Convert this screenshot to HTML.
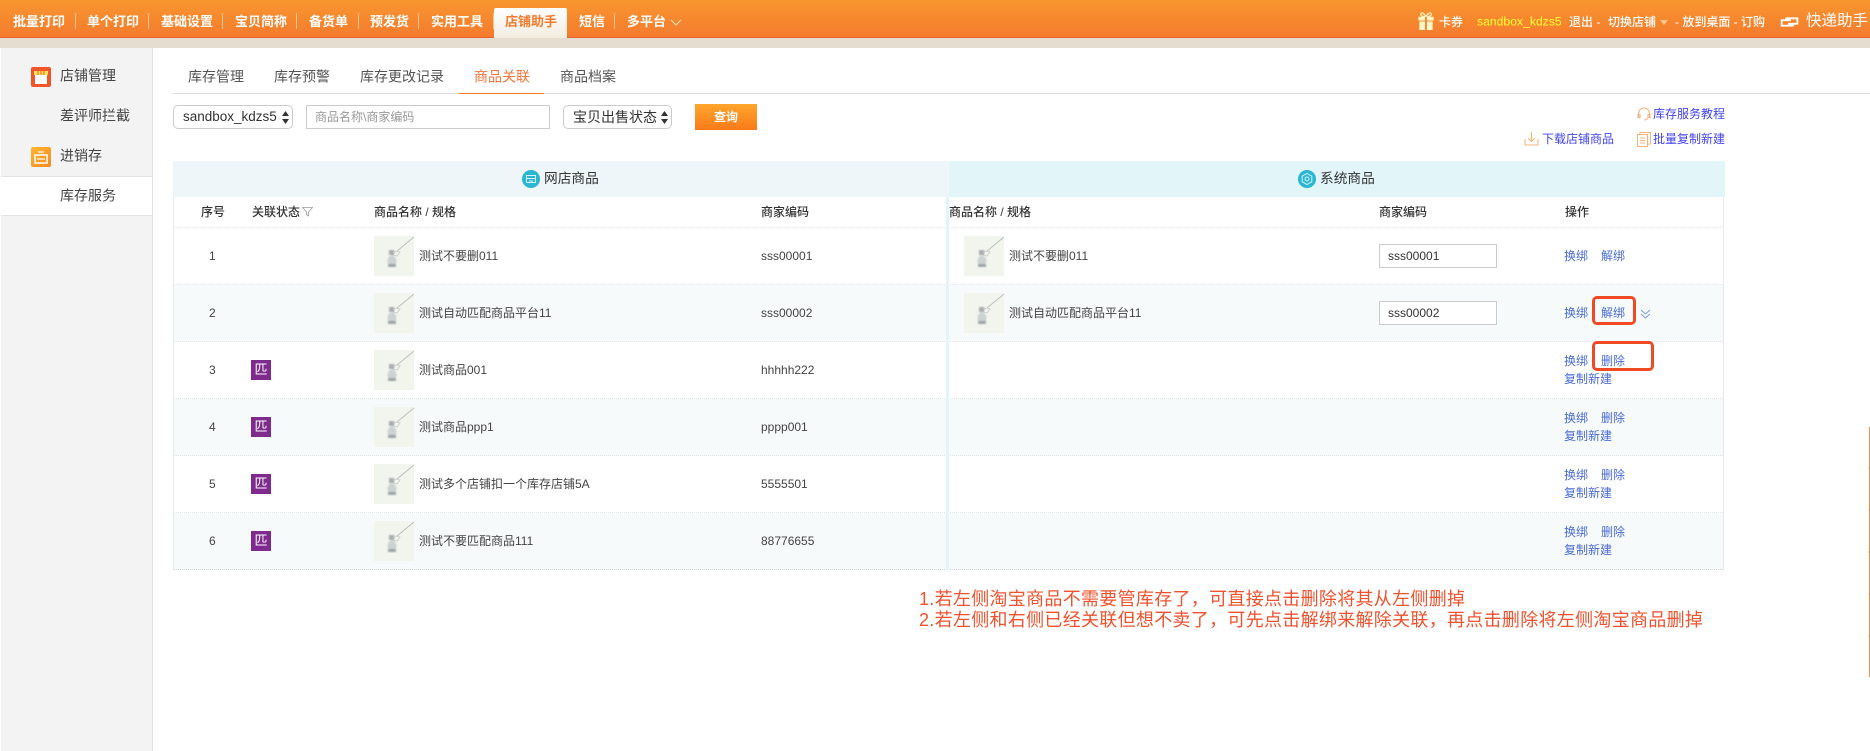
<!DOCTYPE html>
<html lang="zh"><head><meta charset="utf-8"><title>库存服务</title>
<style>
html,body{margin:0;padding:0}
body{width:1870px;height:751px;overflow:hidden;background:#fff;position:relative;font-family:"Liberation Sans","Noto Sans CJK SC",sans-serif;font-size:12px;color:#444}
.a{position:absolute;white-space:nowrap}
.c{transform:translateY(-50%);line-height:1.2}
.h{color:#fff;font-size:13px;font-weight:bold;top:21.500px}
.sep{position:absolute;top:13px;height:16px;width:1px;background:#fbc593}
.s{font-size:14px;color:#444}
.t{font-size:14px;color:#555;top:77px}
.b{position:absolute;border:1px solid #ccc;box-sizing:border-box;background:#fff}
.sel{border-radius:5px;font-size:13.500px;color:#333;line-height:22px}
.th{font-size:12px;color:#333;font-weight:500;top:212px}
.row{position:absolute;left:174px;width:1549px;height:56px;border-bottom:1px dotted #e3e6e7}
.alt{background:#f7fafb}
.n{font-size:12px;color:#444}
.l{font-size:12px;color:#4a6bd6}
.blue{font-size:12px;color:#4343f0}
.badge{position:absolute;left:251px;width:20px;height:20px;background:#7e2b8d;color:#fff;font-size:13px;line-height:20px;text-align:center}
.inp{position:absolute;left:1379px;width:118px;height:24px;border:1px solid #ccc;box-sizing:border-box;font-size:12px;line-height:22px;padding-left:8px;color:#333;background:#fff}
.red{position:absolute;border:3px solid #f04a25;border-radius:5px;box-sizing:border-box}
.note{font-size:18px;color:#f0522d;letter-spacing:.3px;left:919px}
.w{color:#fff;font-size:12px;font-weight:500;top:21.500px}
svg{position:absolute;display:block}
</style></head><body>
<svg width="0" height="0"><defs>
<filter id="bl"><feGaussianBlur stdDeviation=".9"/></filter>
<symbol id="th" viewBox="0 0 40 40"><rect width="40" height="40" fill="#f2f5ee"/><path d="M23 15L40 1" stroke="#b9bfbd" stroke-width="1" fill="none"/><path d="M21 15l5 1-3 4-4-1z" fill="none" stroke="#c6cbc9" stroke-width=".8"/><g filter="url(#bl)"><path d="M15 14h5v5h-5z" fill="#a8aeb0"/><ellipse cx="18" cy="25" rx="4.500" ry="5.500" fill="#cdd2d3"/><rect x="14" y="28" width="8" height="3" fill="#8a9296" opacity=".75"/></g></symbol>
</defs></svg>

<!-- top bar -->
<div class="a" style="left:0;top:0;width:1870px;height:38px;background:linear-gradient(#f99630,#f47b2d);border-bottom:1px solid #e9602a;box-sizing:border-box"></div>
<div class="a" style="left:0;top:38px;width:1870px;height:10px;background:#e5ddd0"></div>
<div class="a h c" style="left:13px">批量打印</div><div class="sep" style="left:75px"></div>
<div class="a h c" style="left:87px">单个打印</div><div class="sep" style="left:148px"></div>
<div class="a h c" style="left:161px">基础设置</div><div class="sep" style="left:222px"></div>
<div class="a h c" style="left:235px">宝贝简称</div><div class="sep" style="left:296px"></div>
<div class="a h c" style="left:309px">备货单</div><div class="sep" style="left:358px"></div>
<div class="a h c" style="left:370px">预发货</div><div class="sep" style="left:418px"></div>
<div class="a h c" style="left:431px">实用工具</div><div class="sep" style="left:493px"></div>
<div class="a" style="left:494px;top:8px;width:73px;height:30px;background:linear-gradient(#fff,#f3ede0);border-radius:2px 2px 0 0"></div>
<div class="a h c" style="left:505px;color:#f47b2d">店铺助手</div>
<div class="a h c" style="left:579px">短信</div><div class="sep" style="left:614px"></div>
<div class="a h c" style="left:627px">多平台</div>
<svg style="left:670px;top:19px" width="12" height="8"><path d="M1 1l5 5 5-5" fill="none" stroke="#fde3c8" stroke-width="1"/></svg>

<svg style="left:1418px;top:12px" width="16" height="18" viewBox="0 0 16 19"><path d="M8 5C6 1 3 0 2.500 2 2 4 5 5 8 5c3 0 6-1 5.500-3C13 0 10 1 8 5z" fill="none" stroke="#fff6c8" stroke-width="1.300"/><rect y="5" width="16" height="4" fill="#fff6c8"/><rect x="1" y="10" width="14" height="9" fill="#fff6c8"/><rect x="7" y="5" width="2" height="14" fill="#f5852e"/></svg>
<div class="a w c" style="left:1439px">卡券</div>
<div class="a c" style="left:1477px;top:21.500px;color:#ffff33;font-size:12.200px">sandbox_kdzs5</div>
<div class="a w c" style="left:1569px">退出 -</div>
<div class="a w c" style="left:1608px">切换店铺</div>
<svg style="left:1660px;top:20px" width="8" height="5"><path d="M0 0h8L4 5z" fill="#fbc593"/></svg>
<div class="a w c" style="left:1675px">- 放到桌面 - 订购</div>
<svg style="left:1780px;top:16px" width="20" height="12" viewBox="0 0 20 13"><path d="M5 2.500h13v6H8M14 10.500H1v-6h10" fill="none" stroke="#fff" stroke-width="2"/></svg>
<div class="a c" style="left:1806px;top:21.500px;color:#fff;font-size:15.500px">快递助手</div>

<!-- sidebar -->
<div class="a" style="left:1px;top:48px;width:151px;height:703px;background:#f3f3f3;border-right:1px solid #e3e3e3"></div>
<svg style="left:31px;top:67px" width="20" height="20" viewBox="0 0 20 20"><rect width="20" height="20" rx="2" fill="#f3552a"/><rect x="4" y="8" width="12" height="9" fill="#fff"/><path d="M3 4h14v4H3z" fill="#ffe75a"/><path d="M7 4v4M10 4v4M13 4v4" stroke="#f3552a"/></svg>
<div class="a s c" style="left:60px;top:76px">店铺管理</div>
<div class="a s c" style="left:60px;top:116px">差评师拦截</div>
<svg style="left:31px;top:147px" width="20" height="20" viewBox="0 0 20 20"><defs><linearGradient id="g1" x1="0" y1="0" x2="1" y2="1"><stop offset="0" stop-color="#ffb52f"/><stop offset="1" stop-color="#f58a22"/></linearGradient></defs><rect width="20" height="20" rx="2" fill="url(#g1)"/><rect x="4" y="8" width="12" height="8" fill="none" stroke="#fff" stroke-width="1.500"/><path d="M7 5h6M6 12h8" stroke="#fff" stroke-width="1.300"/></svg>
<div class="a s c" style="left:60px;top:156px">进销存</div>
<div class="a" style="left:1px;top:176px;width:151px;height:40px;background:#fff;border-top:1px solid #e4e4e4;border-bottom:1px solid #e4e4e4;box-sizing:border-box"></div>
<div class="a s c" style="left:60px;top:196px">库存服务</div>

<!-- tabs -->
<div class="a" style="left:173px;top:93px;width:1697px;height:1px;background:#ddd"></div>
<div class="a t c" style="left:188px">库存管理</div>
<div class="a t c" style="left:274px">库存预警</div>
<div class="a t c" style="left:360px">库存更改记录</div>
<div class="a t c" style="left:474px;color:#f4743b">商品关联</div>
<div class="a t c" style="left:560px">商品档案</div>
<div class="a" style="left:459px;top:93px;width:85px;height:1px;background:#f47b2d"></div>

<!-- filters -->
<div class="b sel" style="left:173px;top:105px;width:120px;height:24px;padding-left:9px">sandbox_kdzs5</div>
<svg style="left:282px;top:111px" width="7" height="13"><path d="M3.500 0L7 5H0zM3.500 13L0 8h7z" fill="#333"/></svg>
<div class="b" style="left:306px;top:105px;width:244px;height:24px;font-size:12px;color:#999;line-height:22px;padding-left:8px">商品名称\商家编码</div>
<div class="b sel" style="left:563px;top:105px;width:109px;height:24px;padding-left:9px;font-size:14px">宝贝出售状态</div>
<svg style="left:661px;top:111px" width="7" height="13"><path d="M3.500 0L7 5H0zM3.500 13L0 8h7z" fill="#333"/></svg>
<div class="a" style="left:695px;top:104px;width:62px;height:26px;background:linear-gradient(#ffa62c,#f97a1a);color:#fff;font-size:12px;font-weight:bold;text-align:center;line-height:26px">查询</div>

<!-- right links -->
<svg style="left:1637px;top:107px" width="14" height="14" viewBox="0 0 14 14"><path d="M1.500 10V6.500a5.500 5.500 0 0 1 11 0V10M1 7.500h2v3H1zM11 7.500h2v3h-2zM11 11c-1 1.500-2 2-4 2" fill="none" stroke="#f9b27a" stroke-width="1.100"/></svg>
<div class="a blue c" style="left:1653px;top:114px">库存服务教程</div>
<svg style="left:1524px;top:131px" width="15" height="15" viewBox="0 0 15 15"><path d="M1 8v6h13V8M7.500 1v9M4 7l3.500 3.500L11 7" fill="none" stroke="#f9b27a" stroke-width="1.100"/></svg>
<div class="a blue c" style="left:1542px;top:139px">下载店铺商品</div>
<svg style="left:1637px;top:132px" width="14" height="15" viewBox="0 0 14 15"><path d="M.500 2.500h10v12H.500zM3 2.500V.500h10.500V12h-3M3 6h5M3 8.500h5M3 11h5" fill="none" stroke="#f9b27a" stroke-width="1"/></svg>
<div class="a blue c" style="left:1653px;top:139px">批量复制新建</div>

<!-- table -->
<div class="a" style="left:173px;top:161px;width:776px;height:36px;background:#eef6f9"></div>
<div class="a" style="left:949px;top:161px;width:776px;height:36px;background:#e2f6fa"></div>
<div class="a" style="left:174px;top:197px;width:1549px;height:31px;border-bottom:1px dotted #e3e6e7;box-sizing:border-box"></div>

<svg style="left:522px;top:170px" width="18" height="18" viewBox="0 0 18 18"><circle cx="9" cy="9" r="9" fill="#2bb6d2"/><path d="M4.500 5.500h9v7h-9zM4.500 8.500h9M7 11h4" fill="none" stroke="#d5f2f7" stroke-width="1"/></svg>
<div class="a c" style="left:544px;top:179px;font-size:13.700px;color:#333">网店商品</div>
<svg style="left:1298px;top:170px" width="18" height="18" viewBox="0 0 18 18"><circle cx="9" cy="9" r="9" fill="#2bb6d2"/><path d="M9 3.500l4.800 2.700v5.600L9 14.500l-4.800-2.700V6.200z" fill="none" stroke="#d5f2f7"/><circle cx="9" cy="9" r="2" fill="none" stroke="#d5f2f7"/></svg>
<div class="a c" style="left:1320px;top:179px;font-size:13.700px;color:#333">系统商品</div>

<div class="a th c" style="left:201px">序号</div>
<div class="a th c" style="left:252px">关联状态</div>
<svg style="left:302px;top:207px" width="11" height="10"><path d="M.500.500h10L6.500 5v4l-2-1.500V5z" fill="none" stroke="#999" stroke-width=".8"/></svg>
<div class="a th c" style="left:374px">商品名称 / 规格</div>
<div class="a th c" style="left:761px">商家编码</div>
<div class="a th c" style="left:949px">商品名称 / 规格</div>
<div class="a th c" style="left:1379px">商家编码</div>
<div class="a th c" style="left:1565px">操作</div>

<div class="row" style="top:228px"></div>
<div class="row alt" style="top:285px"></div>
<div class="row" style="top:342px"></div>
<div class="row alt" style="top:399px"></div>
<div class="row" style="top:456px"></div>
<div class="row alt" style="top:513px;border-bottom:1px dotted #cfd3d4"></div>
<div class="a" style="left:946px;top:197px;width:3px;height:373px;background:#e2f6fa"></div>
<div class="a" style="left:173px;top:197px;width:1px;height:373px;background:#e8eaeb"></div>
<div class="a" style="left:1723px;top:197px;width:1px;height:373px;background:#e8eaeb"></div>

<!-- row numbers -->
<div class="a n c" style="left:209px;top:256px">1</div>
<div class="a n c" style="left:209px;top:313px">2</div>
<div class="a n c" style="left:209px;top:370px">3</div>
<div class="a n c" style="left:209px;top:427px">4</div>
<div class="a n c" style="left:209px;top:484px">5</div>
<div class="a n c" style="left:209px;top:541px">6</div>

<!-- badges -->
<div class="badge" style="top:360px">匹</div>
<div class="badge" style="top:417px">匹</div>
<div class="badge" style="top:474px">匹</div>
<div class="badge" style="top:531px">匹</div>

<!-- thumbs left -->
<svg style="left:374px;top:236px" width="40" height="40"><use href="#th"/></svg>
<svg style="left:374px;top:293px" width="40" height="40"><use href="#th"/></svg>
<svg style="left:374px;top:350px" width="40" height="40"><use href="#th"/></svg>
<svg style="left:374px;top:407px" width="40" height="40"><use href="#th"/></svg>
<svg style="left:374px;top:464px" width="40" height="40"><use href="#th"/></svg>
<svg style="left:374px;top:521px" width="40" height="40"><use href="#th"/></svg>
<div class="a n c" style="left:419px;top:256px">测试不要删011</div>
<div class="a n c" style="left:419px;top:313px">测试自动匹配商品平台11</div>
<div class="a n c" style="left:419px;top:370px">测试商品001</div>
<div class="a n c" style="left:419px;top:427px">测试商品ppp1</div>
<div class="a n c" style="left:419px;top:484px">测试多个店铺扣一个库存店铺5A</div>
<div class="a n c" style="left:419px;top:541px">测试不要匹配商品111</div>
<div class="a n c" style="left:761px;top:256px">sss00001</div>
<div class="a n c" style="left:761px;top:313px">sss00002</div>
<div class="a n c" style="left:761px;top:370px">hhhhh222</div>
<div class="a n c" style="left:761px;top:427px">pppp001</div>
<div class="a n c" style="left:761px;top:484px">5555501</div>
<div class="a n c" style="left:761px;top:541px">88776655</div>

<!-- right side -->
<svg style="left:964px;top:236px" width="40" height="40"><use href="#th"/></svg>
<svg style="left:964px;top:293px" width="40" height="40"><use href="#th"/></svg>
<div class="a n c" style="left:1009px;top:256px">测试不要删011</div>
<div class="a n c" style="left:1009px;top:313px">测试自动匹配商品平台11</div>
<div class="inp" style="top:244px">sss00001</div>
<div class="inp" style="top:301px">sss00002</div>

<!-- ops -->
<div class="a l c" style="left:1564px;top:256px">换绑</div><div class="a l c" style="left:1601px;top:256px">解绑</div>
<div class="a l c" style="left:1564px;top:313px">换绑</div><div class="a l c" style="left:1601px;top:313px">解绑</div>
<svg style="left:1640px;top:309px" width="11" height="10"><path d="M1 1l4.500 4L10 1M1 5l4.500 4L10 5" fill="none" stroke="#7d9be0" stroke-width="1"/></svg>
<div class="a l c" style="left:1564px;top:361px">换绑</div><div class="a l c" style="left:1601px;top:361px">删除</div><div class="a l c" style="left:1564px;top:379px">复制新建</div>
<div class="a l c" style="left:1564px;top:418px">换绑</div><div class="a l c" style="left:1601px;top:418px">删除</div><div class="a l c" style="left:1564px;top:436px">复制新建</div>
<div class="a l c" style="left:1564px;top:475px">换绑</div><div class="a l c" style="left:1601px;top:475px">删除</div><div class="a l c" style="left:1564px;top:493px">复制新建</div>
<div class="a l c" style="left:1564px;top:532px">换绑</div><div class="a l c" style="left:1601px;top:532px">删除</div><div class="a l c" style="left:1564px;top:550px">复制新建</div>

<!-- annotations -->
<div class="red" style="left:1592px;top:296px;width:44px;height:29px"></div>
<div class="red" style="left:1592px;top:341px;width:62px;height:30px"></div>
<div class="a note c" style="top:600px">1.若左侧淘宝商品不需要管库存了，可直接点击删除将其从左侧删掉</div>
<div class="a note c" style="top:621px">2.若左侧和右侧已经关联但想不卖了，可先点击解绑来解除关联，再点击删除将左侧淘宝商品删掉</div>

<!-- right edge line -->
<div class="a" style="left:1869px;top:427px;width:1px;height:250px;background:repeating-linear-gradient(#ee8f45 0 40px,#c97a42 40px 42px)"></div>
</body></html>
